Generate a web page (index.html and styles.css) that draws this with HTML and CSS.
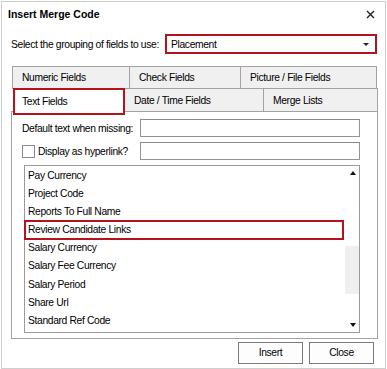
FILE: index.html
```html
<!DOCTYPE html>
<html lang="en">
<head>
    <meta charset="UTF-8">
    <title>Insert Merge Code</title>
    <link rel="stylesheet" href="styles.css">
</head>
<body>

    <div class="dialog">
        <!-- Title bar -->
        <div class="titlebar">
            <span class="title">Insert Merge Code</span>
            <svg class="close-icon" width="9" height="9" viewBox="0 0 9 9">
                <path d="M1 1 L8 8 M8 1 L1 8" stroke="#222" stroke-width="1.4" fill="none"/>
            </svg>
        </div>

        <!-- Grouping selector -->
        <div class="group-row">
            <span class="group-label">Select the grouping of fields to use:</span>
            <div class="select highlight">
                <span>Placement</span>
                <span class="caret"></span>
            </div>
        </div>

        <!-- Tabs -->
        <div class="tabs">
            <div class="tab-row">
                <div class="tab tab-numeric">Numeric Fields</div>
                <div class="tab tab-check">Check Fields</div>
                <div class="tab tab-picture">Picture / File Fields</div>
            </div>
            <div class="tab-row second">
                <div class="tab tab-text active">Text Fields</div>
                <div class="tab tab-date">Date / Time Fields</div>
                <div class="tab tab-merge">Merge Lists</div>
            </div>
        </div>

        <div class="panel">
            <div class="field-row">
                <span class="field-label">Default text when missing:</span>
                <div class="input"></div>
            </div>
            <div class="field-row">
                <span class="field-label check-label"><span class="checkbox"></span>Display as hyperlink?</span>
                <div class="input"></div>
            </div>

            <div class="listbox">
                <div class="list-items">
                    <div class="list-item">Pay Currency</div>
                    <div class="list-item">Project Code</div>
                    <div class="list-item">Reports To Full Name</div>
                    <div class="list-item selected">Review Candidate Links</div>
                    <div class="list-item">Salary Currency</div>
                    <div class="list-item">Salary Fee Currency</div>
                    <div class="list-item">Salary Period</div>
                    <div class="list-item">Share Url</div>
                    <div class="list-item">Standard Ref Code</div>
                </div>
                <div class="scrollbar">
                    <span class="arrow up"></span>
                    <span class="thumb"></span>
                    <span class="arrow down"></span>
                </div>
            </div>
        </div>

        <!-- Buttons -->
        <div class="buttons">
            <div class="btn">Insert</div>
            <div class="btn">Close</div>
        </div>
    </div>

</body>
</html>
```
FILE: styles.css
```css
* {
    box-sizing: border-box;
}

body {
    margin: 0;
    background: #fff;
    font-family: 'Liberation Sans', Arial, sans-serif;
    font-size: 10.3px;
    letter-spacing: -0.35px;
    color: #000;
}

.dialog {
    width: 385px;
    height: 368px;
    margin: 1px 0 0 1px;
    border: 1px solid #cfcfcf;
    background: #fff;
    padding: 0 6px 0 9px;
}

/* Title bar */
.titlebar {
    height: 24px;
    display: flex;
    align-items: center;
    justify-content: space-between;
    margin-left: -3px;
    padding-right: 4px;
}

.title {
    font-weight: bold;
    font-size: 10.5px;
    letter-spacing: 0;
}

/* Grouping row */
.group-row {
    margin-top: 8px;
    height: 20px;
    display: flex;
    align-items: center;
}

.group-label {
    flex: 1;
}

.select {
    width: 212px;
    height: 20px;
    margin-right: 2px;
    display: flex;
    align-items: center;
    justify-content: space-between;
    padding: 0 6px 0 4px;
    background: #fff;
}

.highlight {
    border: 2px solid #b5121b;
}

.caret {
    width: 0;
    height: 0;
    border-left: 3px solid transparent;
    border-right: 3px solid transparent;
    border-top: 3px solid #222;
}

/* Tabs */
.tabs {
    margin-top: 12px;
    margin-left: 1px;
}

.tab-row {
    display: flex;
    align-items: flex-start;
}

.tab-row.second {
    margin-top: -1px;
}

.tab {
    height: 23px;
    line-height: 22px;
    padding-left: 9px;
    background: #f0f0f0;
    border: 1px solid #a3a3a3;
    margin-left: -1px;
}

.tab-row .tab:first-child {
    margin-left: 0;
}

.tab-numeric { width: 118px; }
.tab-check { width: 112px; }
.tab-picture { width: 137px; }

.tab-row.second .tab {
    height: 24px;
    line-height: 23px;
}

.tab-row.second .tab.active {
    width: 112px;
    height: 27px;
    line-height: 23px;
    margin-left: 1px;
    margin-bottom: -3px;
    padding-left: 7px;
    background: #fff;
    border: 2px solid #b5121b;
    position: relative;
    z-index: 1;
}

.tab-date { width: 140px; }
.tab-merge { width: 115px; }

/* Panel */
.panel {
    margin-top: -1px;
    width: 367px;
    height: 228px;
    border: 1px solid #a3a3a3;
    background: #fff;
    padding: 7px 0 0 10px;
}

.field-row {
    display: flex;
    align-items: center;
    height: 18px;
    margin-bottom: 5px;
}

.field-label {
    width: 118px;
    display: flex;
    align-items: center;
}

.checkbox {
    width: 13px;
    height: 13px;
    border: 1px solid #8a8a8a;
    background: #fff;
    margin-right: 3px;
}

.input {
    width: 220px;
    height: 18px;
    border: 1px solid #949494;
    border-top-color: #8a8a8a;
    background: #fff;
}

/* List box */
.listbox {
    margin-left: 2px;
    width: 336px;
    height: 168px;
    border: 1px solid #9a9a9a;
    display: flex;
}

.list-items {
    flex: 1;
    padding-top: 1px;
}

.list-item {
    height: 18.1px;
    line-height: 18px;
    padding-left: 3px;
}

.list-item.selected {
    outline: 2px solid #b5121b;
    outline-offset: -1px;
}

.scrollbar {
    width: 16px;
    display: flex;
    flex-direction: column;
    align-items: center;
    padding: 5px 0 5px 1px;
}

.arrow {
    width: 0;
    height: 0;
    border-left: 3px solid transparent;
    border-right: 3px solid transparent;
    margin-left: 2px;
}

.arrow.up {
    border-bottom: 4px solid #111;
}

.arrow.down {
    border-top: 4px solid #111;
    margin-top: auto;
}

.thumb {
    width: 14px;
    height: 48px;
    margin-top: 71px;
    background: #efefef;
}

/* Buttons */
.buttons {
    display: flex;
    justify-content: flex-end;
    gap: 6px;
    margin-top: 3px;
    margin-right: 5px;
}

.btn {
    width: 65px;
    height: 22px;
    line-height: 20px;
    text-align: center;
    border: 1px solid #7a7a7a;
    background: #fdfdfd;
}
```
